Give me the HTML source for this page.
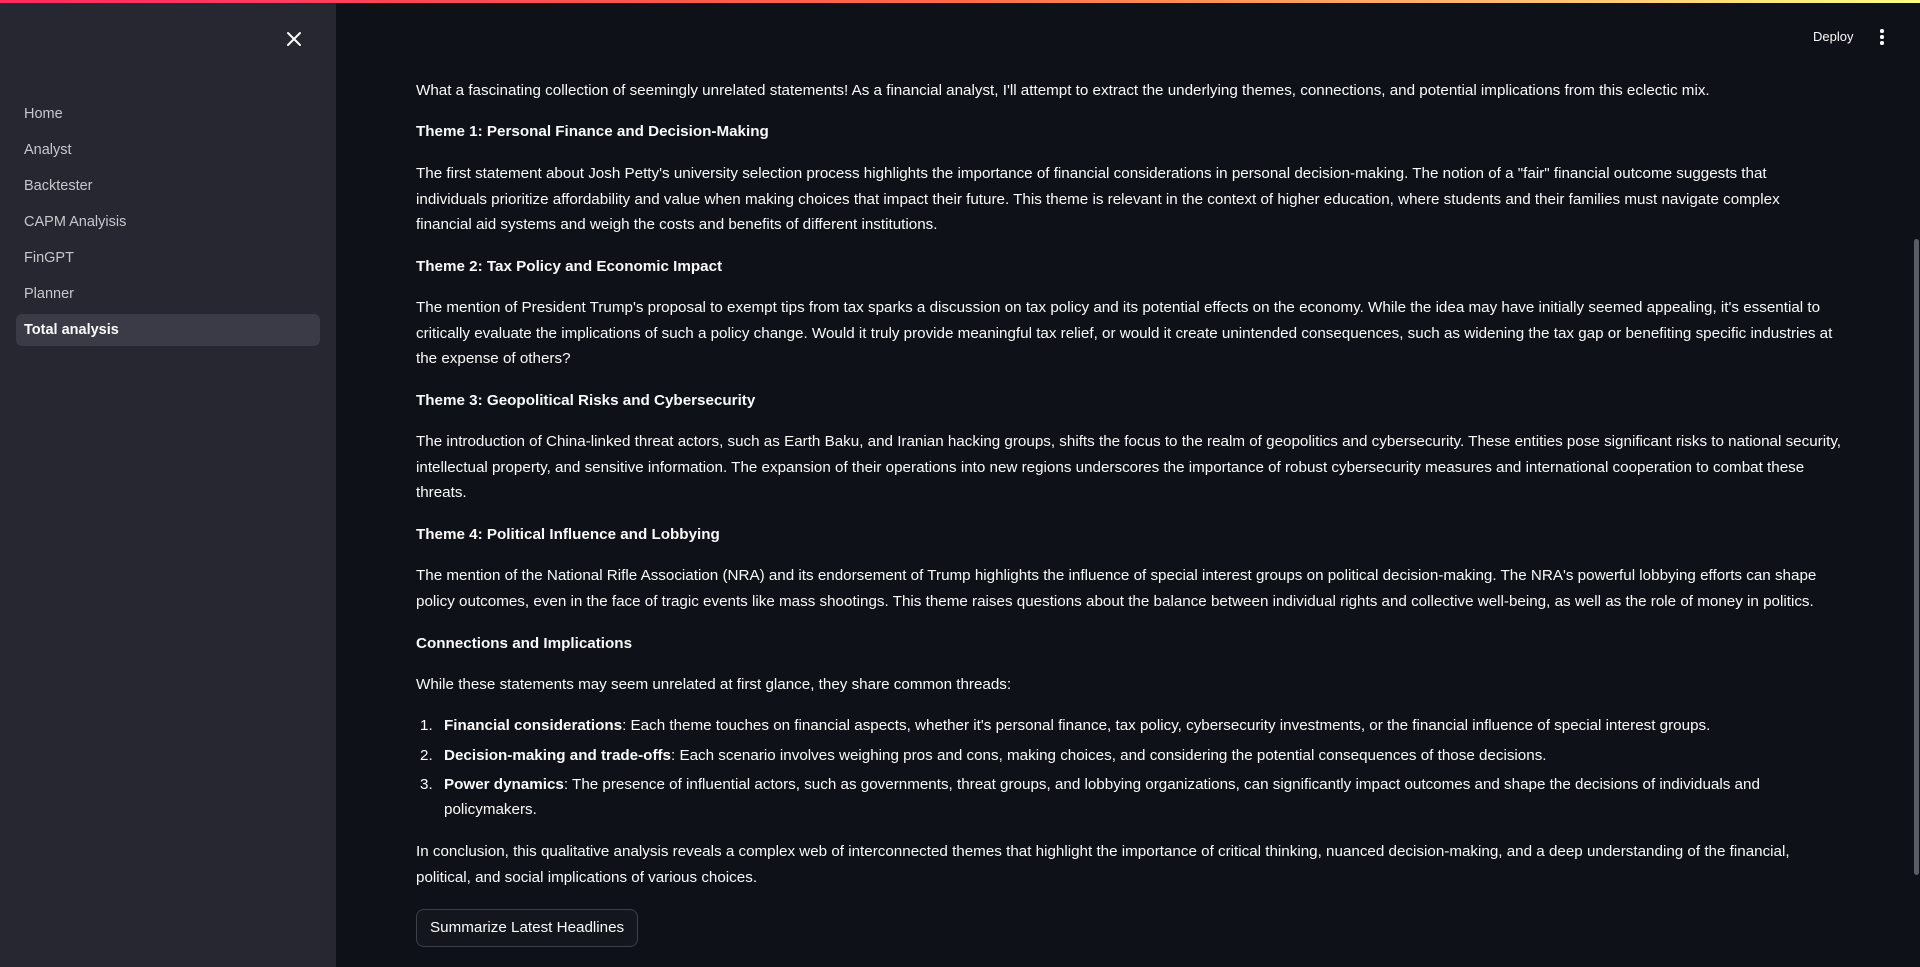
<!DOCTYPE html>
<html><head><meta charset="utf-8"><style>
*{box-sizing:border-box;margin:0;padding:0}
html,body{width:1920px;height:967px;overflow:hidden;background:#0e1117;color:#fafafa;font-family:"Liberation Sans",sans-serif}
.top{position:absolute;left:0;top:0;width:1920px;height:3px;background:linear-gradient(90deg,#ff2b5e,#ff6a4d 50%,#fffd80)}
.side{position:absolute;left:0;top:3px;width:336px;height:964px;background:#262730}
.x{position:absolute;left:285px;top:27px;width:18px;height:18px}
.nav{position:absolute;left:16px;top:95px;width:304px}
.nav div{height:32px;line-height:32px;padding-left:8px;margin-bottom:4px;font-size:14.5px;color:#c7c8cc;border-radius:6px}
.nav .sel{background:#3a3b47;color:#fafafa;font-weight:bold}
.deploy{position:absolute;left:1813px;top:29px;font-size:13px;color:#fafafa}
.dots{position:absolute;left:1880px;top:29px}
.dots i{display:block;width:3.5px;height:3.5px;background:#fafafa;border-radius:50%;margin-bottom:2.5px}
.main{position:absolute;left:416px;top:78px;font-size:15.2px;line-height:25.6px;white-space:nowrap}
.main p{margin-bottom:15.9px}
ol{list-style:none;margin-bottom:15.9px}
ol li{position:relative;padding-left:28px;margin-bottom:3.6px}
ol li span.n{position:absolute;left:4px}
.btn{display:inline-block;margin-top:3px;border:1px solid #3d3f4b;border-radius:8px;padding:0 13px;height:38px;line-height:36px;font-size:15.2px;background:#13161d}
.sb{position:absolute;left:1914px;top:239px;width:5px;height:636px;background:#5a5c66;border-radius:3px}
</style></head><body>
<div class="top"></div>
<div class="side">
<svg class="x" viewBox="0 0 18 18"><path d="M3 3L15 15M15 3L3 15" stroke="#fafafa" stroke-width="2" stroke-linecap="round"/></svg>
<div class="nav">
<div>Home</div><div>Analyst</div><div>Backtester</div><div>CAPM Analyisis</div><div>FinGPT</div><div>Planner</div><div class="sel">Total analysis</div>
</div>
</div>
<div class="deploy">Deploy</div>
<div class="dots"><i></i><i></i><i></i></div>
<div class="sb"></div>
<div class="main">
<p>What a fascinating collection of seemingly unrelated statements! As a financial analyst, I'll attempt to extract the underlying themes, connections, and potential implications from this eclectic mix.</p>
<p><b>Theme 1: Personal Finance and Decision-Making</b></p>
<p>The first statement about Josh Petty's university selection process highlights the importance of financial considerations in personal decision-making. The notion of a "fair" financial outcome suggests that<br>individuals prioritize affordability and value when making choices that impact their future. This theme is relevant in the context of higher education, where students and their families must navigate complex<br>financial aid systems and weigh the costs and benefits of different institutions.</p>
<p><b>Theme 2: Tax Policy and Economic Impact</b></p>
<p>The mention of President Trump's proposal to exempt tips from tax sparks a discussion on tax policy and its potential effects on the economy. While the idea may have initially seemed appealing, it's essential to<br>critically evaluate the implications of such a policy change. Would it truly provide meaningful tax relief, or would it create unintended consequences, such as widening the tax gap or benefiting specific industries at<br>the expense of others?</p>
<p><b>Theme 3: Geopolitical Risks and Cybersecurity</b></p>
<p>The introduction of China-linked threat actors, such as Earth Baku, and Iranian hacking groups, shifts the focus to the realm of geopolitics and cybersecurity. These entities pose significant risks to national security,<br>intellectual property, and sensitive information. The expansion of their operations into new regions underscores the importance of robust cybersecurity measures and international cooperation to combat these<br>threats.</p>
<p><b>Theme 4: Political Influence and Lobbying</b></p>
<p>The mention of the National Rifle Association (NRA) and its endorsement of Trump highlights the influence of special interest groups on political decision-making. The NRA's powerful lobbying efforts can shape<br>policy outcomes, even in the face of tragic events like mass shootings. This theme raises questions about the balance between individual rights and collective well-being, as well as the role of money in politics.</p>
<p><b>Connections and Implications</b></p>
<p>While these statements may seem unrelated at first glance, they share common threads:</p>
<ol>
<li><span class="n">1.</span><b>Financial considerations</b>: Each theme touches on financial aspects, whether it's personal finance, tax policy, cybersecurity investments, or the financial influence of special interest groups.</li>
<li><span class="n">2.</span><b>Decision-making and trade-offs</b>: Each scenario involves weighing pros and cons, making choices, and considering the potential consequences of those decisions.</li>
<li><span class="n">3.</span><b>Power dynamics</b>: The presence of influential actors, such as governments, threat groups, and lobbying organizations, can significantly impact outcomes and shape the decisions of individuals and<br>policymakers.</li>
</ol>
<p>In conclusion, this qualitative analysis reveals a complex web of interconnected themes that highlight the importance of critical thinking, nuanced decision-making, and a deep understanding of the financial,<br>political, and social implications of various choices.</p>
<div class="btn">Summarize Latest Headlines</div>
</div>
</body></html>
